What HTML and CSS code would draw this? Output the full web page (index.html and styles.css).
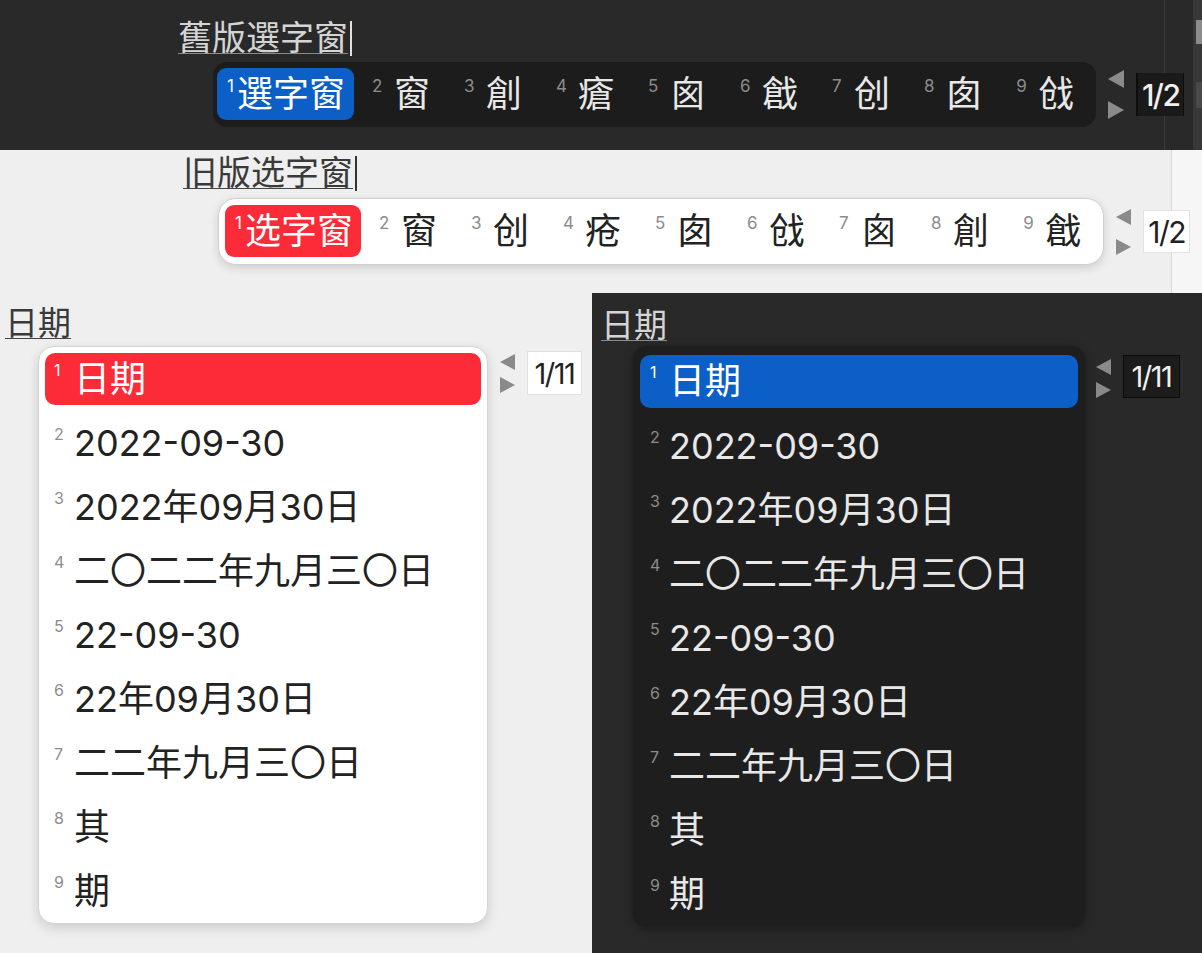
FILE: index.html
```html
<!DOCTYPE html>
<html lang="zh">
<head>
<meta charset="utf-8">
<title>Squirrel candidate windows</title>
<link rel="stylesheet" href="styles.css">
</head>
<body>
<div class="band band-top">
  <div class="preedit pe-dark tc"><span class="pe-text">舊版選字窗</span><span class="caret"></span></div>
  <div class="hline hline-top">
    <div class="hbar hbar-dark tc">
      <div class="cand hl"><span class="lbl">1</span><span class="txt">選字窗</span></div>
      <div class="cand"><span class="lbl">2</span><span class="txt">窗</span></div>
      <div class="cand"><span class="lbl">3</span><span class="txt">創</span></div>
      <div class="cand"><span class="lbl">4</span><span class="txt">瘡</span></div>
      <div class="cand"><span class="lbl">5</span><span class="txt">囪</span></div>
      <div class="cand"><span class="lbl">6</span><span class="txt">戧</span></div>
      <div class="cand"><span class="lbl">7</span><span class="txt">创</span></div>
      <div class="cand"><span class="lbl">8</span><span class="txt">囱</span></div>
      <div class="cand"><span class="lbl">9</span><span class="txt">戗</span></div>
    </div>
    <div class="pager pager-top">
      <div class="arrows"><span class="tri tri-left"></span><span class="tri tri-right"></span></div>
      <div class="page">1/2</div>
    </div>
  </div>
</div>

<div class="band band-mid">
  <div class="preedit pe-light sc"><span class="pe-text">旧版选字窗</span><span class="caret"></span></div>
  <div class="hline hline-mid">
    <div class="hbar hbar-light sc">
      <div class="cand hl"><span class="lbl">1</span><span class="txt">选字窗</span></div>
      <div class="cand"><span class="lbl">2</span><span class="txt">窗</span></div>
      <div class="cand"><span class="lbl">3</span><span class="txt">创</span></div>
      <div class="cand"><span class="lbl">4</span><span class="txt">疮</span></div>
      <div class="cand"><span class="lbl">5</span><span class="txt">囱</span></div>
      <div class="cand"><span class="lbl">6</span><span class="txt">戗</span></div>
      <div class="cand"><span class="lbl">7</span><span class="txt">囪</span></div>
      <div class="cand"><span class="lbl">8</span><span class="txt">創</span></div>
      <div class="cand"><span class="lbl">9</span><span class="txt">戧</span></div>
    </div>
    <div class="pager pager-mid">
      <div class="arrows"><span class="tri tri-left"></span><span class="tri tri-right"></span></div>
      <div class="page">1/2</div>
    </div>
  </div>
</div>

<div class="bottom">
  <div class="col col-light">
    <div class="preedit pe-light pe-small sc"><span class="pe-text">日期</span></div>
    <div class="vline">
      <div class="vpanel vpanel-light sc">
        <div class="row hl"><span class="lbl">1</span><span class="txt">日期</span></div>
        <div class="row"><span class="lbl">2</span><span class="txt">2022-09-30</span></div>
        <div class="row"><span class="lbl">3</span><span class="txt">2022年09月30日</span></div>
        <div class="row"><span class="lbl">4</span><span class="txt">二〇二二年九月三〇日</span></div>
        <div class="row"><span class="lbl">5</span><span class="txt">22-09-30</span></div>
        <div class="row"><span class="lbl">6</span><span class="txt">22年09月30日</span></div>
        <div class="row"><span class="lbl">7</span><span class="txt">二二年九月三〇日</span></div>
        <div class="row"><span class="lbl">8</span><span class="txt">其</span></div>
        <div class="row"><span class="lbl">9</span><span class="txt">期</span></div>
      </div>
      <div class="pager pager-vl">
        <div class="arrows"><span class="tri tri-left"></span><span class="tri tri-right"></span></div>
        <div class="page">1/11</div>
      </div>
    </div>
  </div>
  <div class="col col-dark">
    <div class="preedit pe-dark pe-small sc"><span class="pe-text">日期</span></div>
    <div class="vline vline-dark">
      <div class="vpanel vpanel-dark sc">
        <div class="row hl"><span class="lbl">1</span><span class="txt">日期</span></div>
        <div class="row"><span class="lbl">2</span><span class="txt">2022-09-30</span></div>
        <div class="row"><span class="lbl">3</span><span class="txt">2022年09月30日</span></div>
        <div class="row"><span class="lbl">4</span><span class="txt">二〇二二年九月三〇日</span></div>
        <div class="row"><span class="lbl">5</span><span class="txt">22-09-30</span></div>
        <div class="row"><span class="lbl">6</span><span class="txt">22年09月30日</span></div>
        <div class="row"><span class="lbl">7</span><span class="txt">二二年九月三〇日</span></div>
        <div class="row"><span class="lbl">8</span><span class="txt">其</span></div>
        <div class="row"><span class="lbl">9</span><span class="txt">期</span></div>
      </div>
      <div class="pager pager-vd">
        <div class="arrows"><span class="tri tri-left"></span><span class="tri tri-right"></span></div>
        <div class="page">1/11</div>
      </div>
    </div>
  </div>
</div>
</body>
</html>
```
FILE: styles.css
```css
* { box-sizing: border-box; }

html, body {
  margin: 0;
  padding: 0;
}

body {
  width: 1202px;
  height: 953px;
  overflow: hidden;
  font-family: "Inter", "Noto Sans CJK SC", sans-serif;
  background: #2a2a2a;
}

.tc { font-family: "Inter", "Noto Sans CJK TC", sans-serif; }
.sc { font-family: "Inter", "Noto Sans CJK SC", sans-serif; }

/* ---------- bands ---------- */
.band {
  display: flex;
  flex-direction: column;
}

.band-top {
  height: 150px;
  padding: 20px 0 0 178px;
  background:
    linear-gradient(to bottom,
      transparent 20px, #8c8c8c 20px, #8c8c8c 44px, transparent 44px,
      transparent 82px, #4a4a4a 82px, #4a4a4a 108px, transparent 108px) 1196px 0 / 6px 100% no-repeat,
    linear-gradient(to right,
      transparent 1164px, #3b3b3b 1164px, #3b3b3b 1165px, transparent 1165px,
      transparent 1193px, #383838 1193px),
    #292929;
}

.band-mid {
  height: 143px;
  padding: 5px 0 0 183px;
  background:
    linear-gradient(to right,
      transparent 1171px, #d9d9d9 1171px, #d9d9d9 1172px, #f6f6f6 1172px),
    #efefef;
}

.bottom {
  display: grid;
  grid-template-columns: 592px 610px;
  height: 660px;
}

.col {
  display: flex;
  flex-direction: column;
}

.col-light {
  background: #efefef;
  padding: 12px 0 0 5px;
}

.col-dark {
  background: #292929;
  padding: 14px 0 0 9px;
}

/* ---------- preedit ---------- */
.preedit {
  display: flex;
  align-items: center;
  font-size: 34px;
  line-height: 36px;
  height: 36px;
}

.pe-text {
  text-decoration: underline;
  text-decoration-thickness: 1px;
  text-underline-offset: 3px;
}

.pe-dark { color: #d4d4d4; }
.pe-dark .pe-text { text-decoration-color: #8a8a8a; }
.pe-light { color: #3a3a3a; }
.pe-light .pe-text { text-decoration-color: #444; }

.pe-small { font-size: 33px; }

.caret {
  display: inline-block;
  width: 2px;
  height: 35px;
  margin-left: 2px;
}
.pe-dark .caret { background: #e0e0e0; }
.pe-light .caret { background: #333; }

/* ---------- horizontal candidate bar ---------- */
.hline {
  display: flex;
  align-items: center;
  gap: 12px;
}

.hline-top { margin: 6px 0 0 35px; }
.hline-mid { margin: 7px 0 0 35px; }

.hbar {
  display: flex;
  align-items: center;
}

.hbar-dark {
  background: #1c1c1c;
  border-radius: 14px;
  padding: 6px 6px 7px 4px;
  color: #e8e8e8;
}

.hbar-light {
  background: #ffffff;
  border-radius: 18px;
  padding: 6px 6px 7px 6px;
  color: #222;
  border: 1px solid #d0d0d0;
  box-shadow: 0 3px 10px rgba(0, 0, 0, 0.14);
}

.cand {
  display: flex;
  align-items: flex-start;
  height: 52px;
  padding: 0 16px 0 18px;
}

.cand .lbl {
  width: 10px;
  font-size: 17px;
  line-height: 17px;
  margin-top: 10px;
  color: #8c8c8c;
}

.cand .txt {
  font-size: 36px;
  line-height: 52px;
  margin-left: 12px;
}

.cand.hl {
  padding: 0 9px 0 10px;
  border-radius: 9px;
  color: #fff;
}
.cand.hl .txt { margin-left: 0; }
.cand.hl .lbl { color: #fff; }

.hbar-dark .cand.hl { background: #0b5fc6; }
.hbar-light .cand.hl { background: #fb2c37; padding-right: 8px; }
.hbar-light .cand { padding-left: 18px; }
.hbar-light .cand.hl { padding-left: 10px; }

/* ---------- pager ---------- */
.pager {
  display: flex;
  align-items: center;
  gap: 12px;
}

.arrows {
  display: flex;
  flex-direction: column;
}

.tri {
  display: block;
  width: 0;
  height: 0;
  border-style: solid;
}

.tri-left {
  border-width: 8px 15px 8px 0;
  border-color: transparent #8a8a8a transparent transparent;
}

.tri-right {
  border-width: 8px 0 8px 15px;
  border-color: transparent transparent transparent #8a8a8a;
}

.page {
  display: flex;
  align-items: center;
  justify-content: center;
  font-family: "Inter", sans-serif;
  letter-spacing: -1.5px;
}

.pager-top .arrows { gap: 13px; }
.pager-top .tri-left { border-width: 9px 16px 9px 0; }
.pager-top .tri-right { border-width: 9px 0 9px 16px; }
.pager-top .page {
  width: 48px;
  height: 43px;
  background: #1a1a1a;
  border-left: 2px solid #0e0e0e;
  border-right: 1px solid #0e0e0e;
  color: #f0f0f0;
  font-size: 30px;
  font-weight: 500;
}

.pager-mid .arrows { gap: 14px; }
.pager-mid .page {
  width: 47px;
  height: 43px;
  background: #fff;
  border: 1px solid #e2e2e2;
  color: #222;
  font-size: 30px;
}

/* ---------- vertical panels ---------- */
.vline {
  display: flex;
  align-items: flex-start;
  gap: 12px;
  margin: 5px 0 0 33px;
}

.vline-dark {
  margin: 3px 0 0 32px;
  gap: 11px;
}

.vpanel {
  display: flex;
  flex-direction: column;
  gap: 12px;
  width: 450px;
}

.vpanel-light {
  background: #fff;
  border-radius: 16px;
  padding: 6px;
  border: 1px solid #d4d4d4;
  box-shadow: 0 4px 12px rgba(0, 0, 0, 0.15);
  color: #222;
}

.vpanel-dark {
  width: 452px;
  background: #1e1e1e;
  border-radius: 14px;
  padding: 9px 7px 7px 7px;
  color: #e8e8e8;
  box-shadow: 0 2px 8px rgba(0, 0, 0, 0.35);
}

.row {
  display: flex;
  align-items: flex-start;
  height: 52px;
  padding-left: 9px;
}

.row .lbl {
  width: 10px;
  font-size: 16px;
  line-height: 16px;
  margin-top: 9px;
  color: #8c8c8c;
}

.row .txt {
  font-size: 36px;
  line-height: 52px;
  margin-left: 10px;
}

.vpanel-dark .row { padding-left: 10px; }
.vpanel-dark .row .txt { margin-left: 9px; }

.row.hl {
  border-radius: 10px;
  color: #fff;
}
.row.hl .lbl { color: #fff; }
.vpanel-light .row.hl { background: #fb2c37; }
.vpanel-dark .row.hl { background: #0b5fc6; height: 53px; }

.pager-vl, .pager-vd {
  align-items: flex-start;
}

.pager-vl .arrows { gap: 7px; margin-top: 8px; }
.pager-vl .page {
  width: 55px;
  height: 44px;
  margin-top: 5px;
  background: #fff;
  border: 1px solid #e0e0e0;
  color: #222;
  font-size: 29px;
}

.pager-vd .arrows { gap: 7px; margin-top: 13px; }
.pager-vd .page {
  width: 57px;
  height: 43px;
  margin-top: 9px;
  background: #1c1c1c;
  border: 1px solid #0c0c0c;
  color: #f0f0f0;
  font-size: 29px;
}
```
